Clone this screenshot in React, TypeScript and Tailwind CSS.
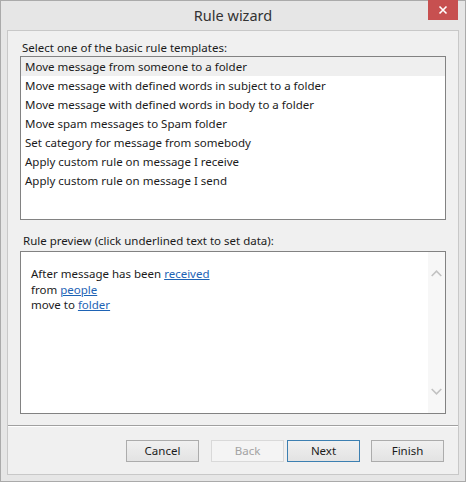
import React from "react";

const items = [
  "Move message from someone to a folder",
  "Move message with defined words in subject to a folder",
  "Move message with defined words in body to a folder",
  "Move spam messages to Spam folder",
  "Set category for message from somebody",
  "Apply custom rule on message I receive",
  "Apply custom rule on message I send",
];

function Btn({ label, variant }: { label: string; variant?: "default" | "disabled" }) {
  const base =
    "w-[73px] h-[22px] flex items-center justify-center text-[11.5px] border bg-gradient-to-b from-[#f0f0f0] to-[#e3e3e3]";
  if (variant === "disabled")
    return (
      <div className="w-[73px] h-[22px] flex items-center justify-center text-[11.5px] border border-[#d9d9d9] bg-[#f4f4f4] text-[#a3a3a3]">
        {label}
      </div>
    );
  if (variant === "default") return <div className={`${base} border-[#3c7fb1] text-[#1b1b1b]`}>{label}</div>;
  return <div className={`${base} border-[#acacac] text-[#1b1b1b]`}>{label}</div>;
}

export default function App() {
  return (
    <div
      className="w-[466px] h-[482px] bg-[#e6e6e6] border border-[#aaaaaa] flex flex-col"
      style={{ fontFamily: '"Noto Sans", "Open Sans", sans-serif' }}
    >
      <div className="h-[29px] relative flex items-center justify-center">
        <span className="text-[14.5px] text-[#333333] leading-none">Rule wizard</span>
        <div className="absolute right-[7px] top-[-1px] w-[30px] h-[20px] bg-[#c75050] flex items-center justify-center">
          <svg width="10" height="10" viewBox="0 0 10 10">
            <path d="M1.5 1.5 L8.5 8.5 M8.5 1.5 L1.5 8.5" stroke="#ffffff" strokeWidth="1.6" />
          </svg>
        </div>
      </div>
      <div className="flex-1 mx-[6px] mb-[6px] border border-[#c8c8c8] bg-[#f0f0f0] flex flex-col">
        <div className="px-[12px] pt-[9px]">
          <div className="text-[11.5px] leading-[16px] text-[#1b1b1b] pl-[2px]">
            Select one of the basic rule templates:
          </div>
          <div className="h-[164px] border border-[#828282] bg-white">
            {items.map((t, i) => (
              <div
                key={t}
                className={`h-[19px] flex items-center pl-[4px] text-[11.5px] text-[#1b1b1b] whitespace-nowrap ${i === 0 ? "bg-[#efefef]" : ""}`}
              >
                {t}
              </div>
            ))}
          </div>
          <div className="text-[11.5px] leading-[16px] text-[#1b1b1b] pl-[3px] mt-[13px] mb-[2px]">
            Rule preview (click underlined text to set data):
          </div>
          <div className="h-[163px] border border-[#828282] bg-white flex">
            <div className="flex-1 pl-[10px] pt-[14px] text-[11.5px] leading-[15.5px] text-[#1b1b1b]">
              <div>
                After message has been <span className="text-[#1e63b5] underline">received</span>
              </div>
              <div>
                from <span className="text-[#1e63b5] underline">people</span>
              </div>
              <div>
                move to <span className="text-[#1e63b5] underline">folder</span>
              </div>
            </div>
            <div className="w-[17px] bg-[#f7f7f7] flex flex-col items-center justify-between py-[18px]">
              <svg width="11" height="7" viewBox="0 0 11 7">
                <path d="M0.7 6 L5.5 1.2 L10.3 6" stroke="#c2c2c2" strokeWidth="1.6" fill="none" />
              </svg>
              <svg width="11" height="7" viewBox="0 0 11 7">
                <path d="M0.7 1 L5.5 5.8 L10.3 1" stroke="#c2c2c2" strokeWidth="1.6" fill="none" />
              </svg>
            </div>
          </div>
        </div>
        <div className="mt-[11px] border-t border-[#a0a0a0] shadow-[inset_0_1px_0_#ffffff] flex-1 flex items-start justify-end pt-[14px] pr-[14px]">
          <div className="flex">
            <Btn label="Cancel" />
            <div className="w-[12px]" />
            <Btn label="Back" variant="disabled" />
            <div className="w-[3px]" />
            <Btn label="Next" variant="default" />
            <div className="w-[11px]" />
            <Btn label="Finish" />
          </div>
        </div>
      </div>
    </div>
  );
}
